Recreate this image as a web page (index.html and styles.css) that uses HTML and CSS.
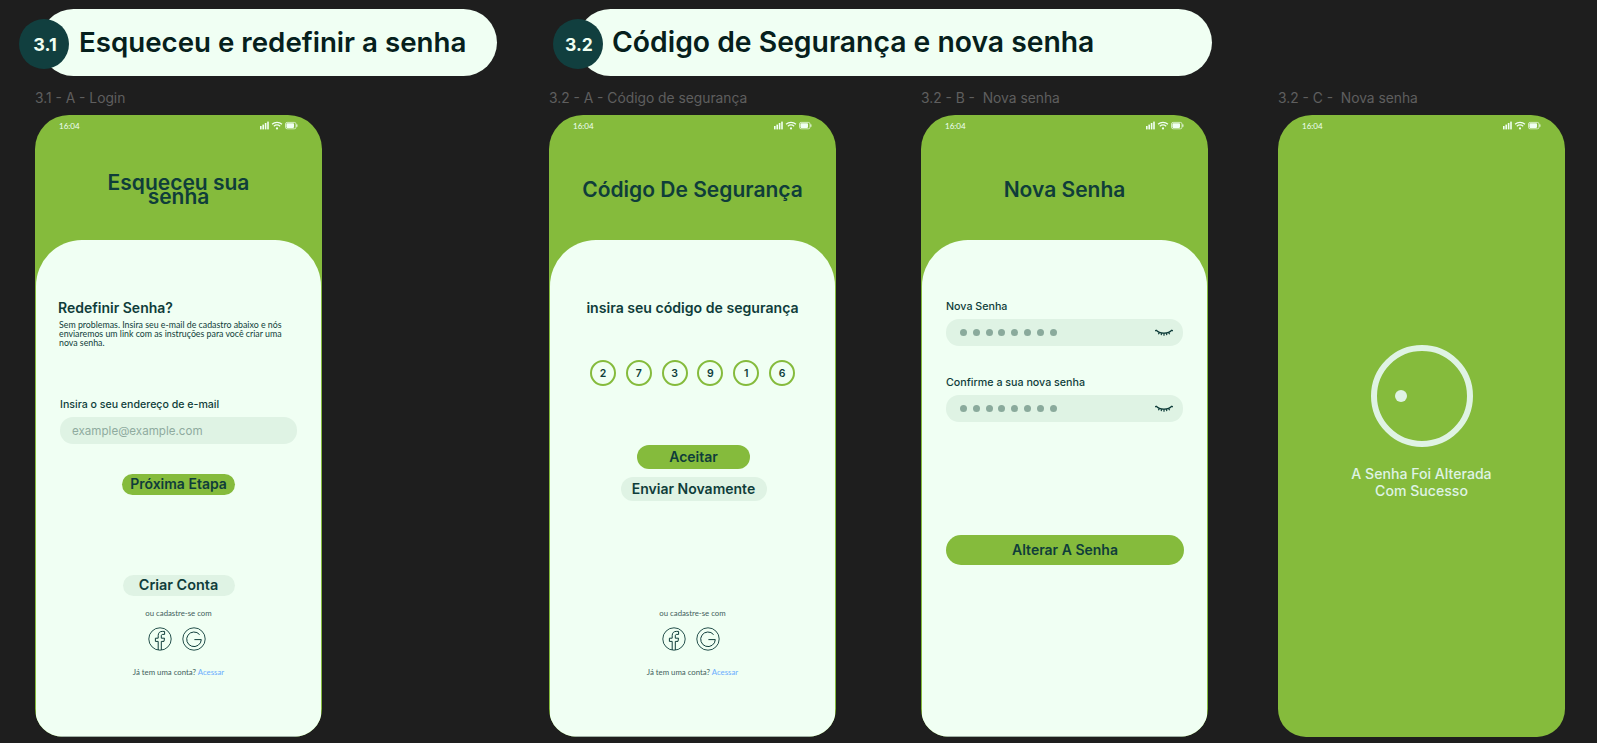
FILE: index.html
```html
<!DOCTYPE html>
<html>
<head>
<meta charset="UTF-8">
<title>Esqueceu e redefinir a senha</title>
<link rel="stylesheet" href="styles.css">
</head>
<body>
	<svg class="defs" width="0" height="0">
		<symbol id="status" viewBox="0 0 38 9">
			<rect x="0" y="5" width="1.6" height="3.4" fill="#f0fff3"/>
			<rect x="2.4" y="3.6" width="1.6" height="4.8" fill="#f0fff3"/>
			<rect x="4.8" y="2" width="1.6" height="6.4" fill="#f0fff3"/>
			<rect x="7.2" y="0.6" width="1.6" height="7.8" fill="#f0fff3"/>
			<path d="M12 3.2a7.6 7.6 0 0 1 10 0M13.8 5.2a5 5 0 0 1 6.4 0" fill="none" stroke="#f0fff3" stroke-width="1.2"/>
			<circle cx="17" cy="7.4" r="1.1" fill="#f0fff3"/>
			<rect x="25.5" y="1.4" width="10.5" height="6.400" rx="1.6" fill="none" stroke="#f0fff3" stroke-width="0.7"/>
			<rect x="26.4" y="2.3" width="7.600" height="4.600" rx="0.8" fill="#f0fff3"/>
			<rect x="36.4" y="3.4" width="1" height="2.4" fill="#f0fff3"/>
		</symbol>
		<symbol id="facebook" viewBox="0 0 24 24">
			<circle cx="12" cy="12" r="11.2" fill="none" stroke="#0f3d3a" stroke-width="0.9"/>
			<path d="M10.2 23v-8.6H7.4v-3.2h2.8V8.6c0-2.8 1.6-4.2 4.1-4.2h2.3v3h-1.7c-1.200 0-1.600.6-1.600 1.600v2.200h3.200l-.5 3.200h-2.700V23" fill="none" stroke="#0f3d3a" stroke-width="1"/>
		</symbol>
		<symbol id="google" viewBox="0 0 24 24">
			<circle cx="12" cy="12" r="11.2" fill="none" stroke="#0f3d3a" stroke-width="0.9"/>
			<path d="M17.6 7.600A7.300 7.300 0 1 0 19.300 12.600H12.400" fill="none" stroke="#0f3d3a" stroke-width="1"/>
		</symbol>
		<symbol id="eye" viewBox="0 0 18 9">
			<path d="M1 2c2 2.200 4.800 3.200 8 3.200s6-1 8-3.200M1 2l-.8 1.200M17 2l.8 1.200M4.400 4.400l-1 1.800M13.600 4.400l1 1.800M9 5.200v2.600M6.600 5l-.4 2.200M11.400 5l.4 2.200" fill="none" stroke="#0f3d3a" stroke-width="1.200"/>
		</symbol>
	</svg>

	<div class="canvas">
		<div class="pill pill-one">
			<span class="badge">3.1</span>
			<h1>Esqueceu e redefinir a senha</h1>
		</div>
		<div class="pill pill-two">
			<span class="badge">3.2</span>
			<h1>Código de Segurança e nova senha</h1>
		</div>

		<!-- 3.1 A -->
		<section class="frame frame-login">
			<div class="caption">3.1 - A - Login</div>
			<div class="phone">
				<div class="status"><span>16:04</span><svg class="status-icons"><use href="#status"/></svg></div>
				<div class="head"><h2 class="head-title stacked">Esqueceu sua senha</h2></div>
				<div class="sheet">
					<h3 class="sheet-title">Redefinir Senha?</h3>
					<p class="note">Sem problemas. Insira seu e-mail de cadastro abaixo e nós enviaremos um link com as instruções para você criar uma nova senha.</p>
					<label class="label label-first">Insira o seu endereço de e-mail</label>
					<div class="field"><span class="placeholder">example@example.com</span></div>
					<a class="btn btn-green btn-next">Próxima Etapa</a>
					<a class="btn btn-pale btn-create">Criar Conta</a>
					<div class="social">
						<div class="social-text">ou cadastre-se com</div>
						<div class="social-icons">
							<svg><use href="#facebook"/></svg>
							<svg><use href="#google"/></svg>
						</div>
						<div class="social-login">Já tem uma conta? <a>Acessar</a></div>
					</div>
				</div>
			</div>
		</section>

		<!-- 3.2 A -->
		<section class="frame frame-code">
			<div class="caption">3.2 - A - Código de segurança</div>
			<div class="phone">
				<div class="status"><span>16:04</span><svg class="status-icons"><use href="#status"/></svg></div>
				<div class="head"><h2 class="head-title">Código De Segurança</h2></div>
				<div class="sheet">
					<h3 class="sheet-title centered">insira seu código de segurança</h3>
					<div class="digits">
						<span>2</span><span>7</span><span>3</span><span>9</span><span>1</span><span>6</span>
					</div>
					<a class="btn btn-green btn-accept">Aceitar</a>
					<a class="btn btn-pale btn-resend">Enviar Novamente</a>
					<div class="social social-code">
						<div class="social-text">ou cadastre-se com</div>
						<div class="social-icons">
							<svg><use href="#facebook"/></svg>
							<svg><use href="#google"/></svg>
						</div>
						<div class="social-login">Já tem uma conta? <a>Acessar</a></div>
					</div>
				</div>
			</div>
		</section>

		<!-- 3.2 B -->
		<section class="frame frame-new">
			<div class="caption">3.2 - B - &nbsp;Nova senha</div>
			<div class="phone">
				<div class="status"><span>16:04</span><svg class="status-icons"><use href="#status"/></svg></div>
				<div class="head"><h2 class="head-title">Nova Senha</h2></div>
				<div class="sheet sheet-new">
					<label class="label">Nova Senha</label>
					<div class="field">
						<div class="dots"><i></i><i></i><i></i><i></i><i></i><i></i><i></i><i></i></div>
						<svg class="eye"><use href="#eye"/></svg>
					</div>
					<label class="label label-next">Confirme a sua nova senha</label>
					<div class="field">
						<div class="dots"><i></i><i></i><i></i><i></i><i></i><i></i><i></i><i></i></div>
						<svg class="eye"><use href="#eye"/></svg>
					</div>
					<a class="btn btn-green btn-change">Alterar A Senha</a>
				</div>
			</div>
		</section>

		<!-- 3.2 C -->
		<section class="frame frame-done">
			<div class="caption">3.2 - C - &nbsp;Nova senha</div>
			<div class="phone phone-done">
				<div class="status"><span>16:04</span><svg class="status-icons"><use href="#status"/></svg></div>
				<div class="ring"><i></i></div>
				<div class="done-text">A Senha Foi Alterada<br>Com Sucesso</div>
			</div>
		</section>
	</div>
</body>
</html>
```

FILE: styles.css
```css
* {
	padding: 0;
	margin: 0;
	box-sizing: border-box;
}

body {
	background-color: #1e1e1e;
	font-family: "Inter", "Liberation Sans", sans-serif;
	overflow: hidden;
}

.defs {
	position: absolute;
}

.canvas {
	position: relative;
	width: 1597px;
	height: 743px;
}

/* section headers */
.pill {
	position: absolute;
	top: 9px;
	height: 67px;
	border-radius: 34px;
	background-color: #f0fff3;
	display: flex;
	align-items: center;
	padding-bottom: 2px;
}

.pill h1 {
	font-size: 27.7px;
	font-weight: 600;
	color: #06201c;
	white-space: nowrap;
}

.pill-one {
	left: 40px;
	width: 457px;
	padding-left: 39px;
}

.pill-two {
	left: 577px;
	width: 635px;
	padding-left: 35px;
}

.pill-two h1 {
	font-size: 28.3px;
}

.badge {
	position: absolute;
	left: -21px;
	top: 10px;
	width: 50px;
	height: 50px;
	padding-left: 2px;
	border-radius: 50%;
	background-color: #113f3f;
	color: #f0fff3;
	font-size: 18px;
	font-weight: 700;
	display: flex;
	align-items: center;
	justify-content: center;
}

.pill-two .badge {
	left: -24px;
	font-size: 17.5px;
}

/* frames on the canvas */
.frame {
	position: absolute;
	top: 90px;
	width: 287px;
}

.frame-login {
	left: 35px;
}

.frame-code {
	left: 549px;
}

.frame-new {
	left: 921px;
}

.frame-done {
	left: 1278px;
}

.caption {
	height: 25px;
	font-size: 13.8px;
	line-height: 16px;
	color: #5f5f5f;
	white-space: nowrap;
}

.phone {
	width: 287px;
	height: 622px;
	border-radius: 34px 34px 28px 28px;
	background-color: #85bb3c;
	display: flex;
	flex-direction: column;
	overflow: hidden;
	padding: 0 1px;
}

.status {
	height: 25px;
	padding: 6px 23px 0 23px;
	display: flex;
	justify-content: space-between;
	font-family: "Lato", sans-serif;
	font-size: 8px;
	line-height: 10px;
	color: #f0fff3;
}

.status-icons {
	width: 38px;
	height: 9px;
}

.head {
	height: 100px;
	display: flex;
	align-items: flex-start;
	justify-content: center;
}

.head-title {
	font-size: 21px;
	font-weight: 600;
	line-height: 100px;
	color: #0f3d3a;
	text-align: center;
}

.head-title.stacked {
	width: 180px;
	line-height: 14px;
	padding-top: 36px;
}

.sheet {
	flex: 1;
	background-color: #f0fff3;
	border-radius: 46px 46px 0 0;
	border-bottom: 1px solid #9fb0a5;
	display: flex;
	flex-direction: column;
	padding: 59px 23px 0 23px;
	color: #0f3d3a;
}

.sheet-new {
	padding-left: 24px;
	padding-top: 60px;
}

.sheet-title {
	font-size: 14px;
	font-weight: 600;
	line-height: 18px;
	margin-left: -1px;
}

.sheet-title.centered {
	text-align: center;
	font-size: 14.1px;
	margin-left: 0;
}

.note {
	margin-top: 3px;
	font-family: "Lato", sans-serif;
	font-size: 8.8px;
	line-height: 9px;
	width: 232px;
}

.label {
	font-size: 10.7px;
	line-height: 14px;
	font-weight: 500;
}

.label-first {
	margin-top: 51px;
	margin-left: 1px;
	font-size: 10.6px;
}

.label-next {
	margin-top: 30px;
}

.field {
	margin-top: 5px;
	width: 237px;
	height: 27px;
	border-radius: 13px;
	background-color: #dff3e4;
	padding: 0 10px 0 14px;
	display: flex;
	align-items: center;
	justify-content: space-between;
	flex-shrink: 0;
}

.label-first + .field {
	margin-left: 1px;
	padding-left: 12px;
}

.placeholder {
	font-size: 11.6px;
	color: #8fab9f;
}

.dots {
	display: flex;
	gap: 5.8px;
}

.dots i {
	display: block;
	width: 7px;
	height: 7px;
	border-radius: 50%;
	background-color: #8aaa9c;
}

.eye {
	width: 18px;
	height: 9px;
}

.btn {
	align-self: center;
	display: flex;
	align-items: center;
	justify-content: center;
	padding-bottom: 2px;
	font-size: 14px;
	font-weight: 600;
	color: #0f3d3a;
	flex-shrink: 0;
	white-space: nowrap;
}

.btn-green {
	background-color: #85bb3c;
}

.btn-pale {
	background-color: #dff3e4;
}

.btn-next {
	width: 113px;
	height: 21px;
	margin-top: 30px;
	border-radius: 11px;
}

.btn-create {
	width: 112px;
	height: 21px;
	margin-top: 80px;
	border-radius: 11px;
	font-size: 14.4px;
}

.btn-accept {
	width: 113px;
	height: 24px;
	margin-top: 59px;
	margin-left: 2px;
	border-radius: 12px;
}

.btn-resend {
	width: 146px;
	height: 24px;
	margin-top: 8px;
	margin-left: 2px;
	border-radius: 12px;
}

.btn-change {
	width: 238px;
	height: 30px;
	margin-top: 113px;
	border-radius: 15px;
}

.digits {
	margin-top: 43px;
	display: flex;
	justify-content: center;
	gap: 9.8px;
}

.digits span {
	width: 26px;
	height: 26px;
	border: 2px solid #85bb3c;
	border-radius: 50%;
	font-size: 10.5px;
	font-weight: 600;
	display: flex;
	align-items: center;
	justify-content: center;
}

.social {
	margin-top: 12px;
	text-align: center;
	font-family: "Lato", sans-serif;
	font-size: 7.8px;
	line-height: 10px;
	color: #42605c;
}

.social-code {
	margin-top: 107px;
}

.social-icons {
	margin-top: 9px;
	display: flex;
	justify-content: center;
	gap: 10px;
	padding-right: 4px;
}

.social-icons svg {
	width: 24px;
	height: 24px;
}

.social-login {
	margin-top: 16px;
}

.social-login a {
	color: #6aaeff;
}

.phone-done {
	align-items: center;
	padding: 0;
}

.phone-done .status {
	width: 100%;
	padding-left: 24px;
	padding-right: 24px;
}

.ring {
	margin-top: 205px;
	width: 102px;
	height: 102px;
	border: 6.5px solid #dff3e4;
	border-radius: 50%;
	display: flex;
	align-items: center;
	padding-left: 18.5px;
}

.ring i {
	display: block;
	width: 12px;
	height: 12px;
	border-radius: 50%;
	background-color: #dff3e4;
}

.done-text {
	margin-top: 18px;
	font-size: 14.1px;
	font-weight: 500;
	line-height: 17px;
	text-align: center;
	color: #dff3e4;
}
```
